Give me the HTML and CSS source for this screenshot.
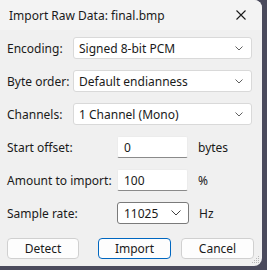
FILE: index.html
```html
<!DOCTYPE html>
<html lang="en">
<head>
    <meta charset="UTF-8">
    <title>Import Raw Data</title>
    <link rel="stylesheet" href="styles.css">
</head>
<body>
    <!-- Dialog window -->
    <div class="window">
        <div class="titlebar">
            <span class="title">Import Raw Data: final.bmp</span>
            <svg class="close" width="10" height="10" viewBox="0 0 10 10">
                <path d="M0.5 0.5 L9.5 9.5 M9.5 0.5 L0.5 9.5" stroke="#1a1a1a" stroke-width="1.1" fill="none"/>
            </svg>
        </div>

        <div class="content">
            <div class="row">
                <label class="label">Encoding:</label>
                <div class="combo combo-wide">
                    <span>Signed 8-bit PCM</span>
                    <svg class="chevron" width="8" height="5" viewBox="0 0 8 5"><path d="M0.5 0.5 L4 4 L7.5 0.5" stroke="#606060" fill="none"/></svg>
                </div>
            </div>
            <div class="row">
                <label class="label">Byte order:</label>
                <div class="combo combo-wide">
                    <span>Default endianness</span>
                    <svg class="chevron" width="8" height="5" viewBox="0 0 8 5"><path d="M0.5 0.5 L4 4 L7.5 0.5" stroke="#606060" fill="none"/></svg>
                </div>
            </div>
            <div class="row">
                <label class="label">Channels:</label>
                <div class="combo combo-wide">
                    <span>1 Channel (Mono)</span>
                    <svg class="chevron" width="8" height="5" viewBox="0 0 8 5"><path d="M0.5 0.5 L4 4 L7.5 0.5" stroke="#606060" fill="none"/></svg>
                </div>
            </div>
            <div class="row">
                <label class="label label-long">Start offset:</label>
                <div class="edit">0</div>
                <span class="unit">bytes</span>
            </div>
            <div class="row">
                <label class="label label-long">Amount to import:</label>
                <div class="edit">100</div>
                <span class="unit">%</span>
            </div>
            <div class="row">
                <label class="label label-long">Sample rate:</label>
                <div class="combo combo-small">
                    <span>11025</span>
                    <svg class="chevron chevron-big" width="10" height="6" viewBox="0 0 10 6"><path d="M0.5 0.5 L5 5 L9.5 0.5" stroke="#404040" fill="none"/></svg>
                </div>
                <span class="unit">Hz</span>
            </div>

            <div class="buttons">
                <button class="btn btn-detect">Detect</button>
                <button class="btn btn-default">Import</button>
                <button class="btn btn-cancel">Cancel</button>
            </div>
        </div>

        <div class="grip">
            <svg width="8" height="8" viewBox="0 0 8 8" fill="#b8b8b8">
                <rect x="6" y="0" width="1" height="1"/>
                <rect x="4" y="2" width="1" height="1"/><rect x="6" y="2" width="1" height="1"/>
                <rect x="2" y="4" width="1" height="1"/><rect x="4" y="4" width="1" height="1"/><rect x="6" y="4" width="1" height="1"/>
                <rect x="0" y="6" width="1" height="1"/><rect x="2" y="6" width="1" height="1"/><rect x="4" y="6" width="1" height="1"/><rect x="6" y="6" width="1" height="1"/>
            </svg>
        </div>
    </div>
</body>
</html>
```

FILE: styles.css
```css
* {
    margin: 0;
    padding: 0;
    box-sizing: border-box;
}

body {
    font-family: 'Noto Sans', 'Liberation Sans', sans-serif;
    font-size: 12px;
    color: #1a1a1a;
    background: #4a4a5c;
    width: 267px;
    height: 270px;
    overflow: hidden;
}

.window {
    position: relative;
    width: 262px;
    height: 266px;
    background: #f0f0f0;
    border-radius: 0 8px 8px 0;
    overflow: hidden;
}

/* Title bar */
.titlebar {
    height: 30px;
    background: #f3f3f3;
    display: flex;
    align-items: center;
    justify-content: space-between;
    padding: 0 16px 0 9px;
}

.title {
    font-size: 12px;
}

/* Form rows */
.content {
    padding: 7px 0 0 7px;
    display: flex;
    flex-direction: column;
    gap: 11px;
}

.row {
    height: 22px;
    display: flex;
    align-items: center;
}

.label {
    width: 66px;
}

.label-long {
    width: 110px;
}

.combo {
    height: 22px;
    background: #ffffff;
    border: 1px solid #d9d9d9;
    border-radius: 3px;
    display: flex;
    align-items: center;
    justify-content: space-between;
    padding: 0 8px 0 5px;
}

.combo-wide {
    width: 179px;
}

.combo-small {
    width: 72px;
    border-color: #7a7a7a;
    padding: 0 7px 0 6px;
}

.edit {
    width: 71px;
    height: 22px;
    background: #ffffff;
    border: 1px solid #ececec;
    border-bottom: 1px solid #8a8a8a;
    border-radius: 2px;
    padding: 2px 6px 0;
    line-height: 18px;
}

.unit {
    margin-left: 10px;
}

/* Buttons */
.buttons {
    display: flex;
    margin-top: 3px;
}

.btn {
    height: 21px;
    width: 73px;
    font-family: inherit;
    font-size: 12px;
    color: #1a1a1a;
    background: #fdfdfd;
    border: 1px solid #d0d0d0;
    border-radius: 4px;
}

.btn-detect {
    width: 72px;
}

.btn-default {
    margin-left: 19px;
    border-color: #0067c0;
}

.btn-cancel {
    margin-left: 10px;
}

.grip {
    position: absolute;
    right: 2px;
    bottom: 2px;
    line-height: 0;
}
```
